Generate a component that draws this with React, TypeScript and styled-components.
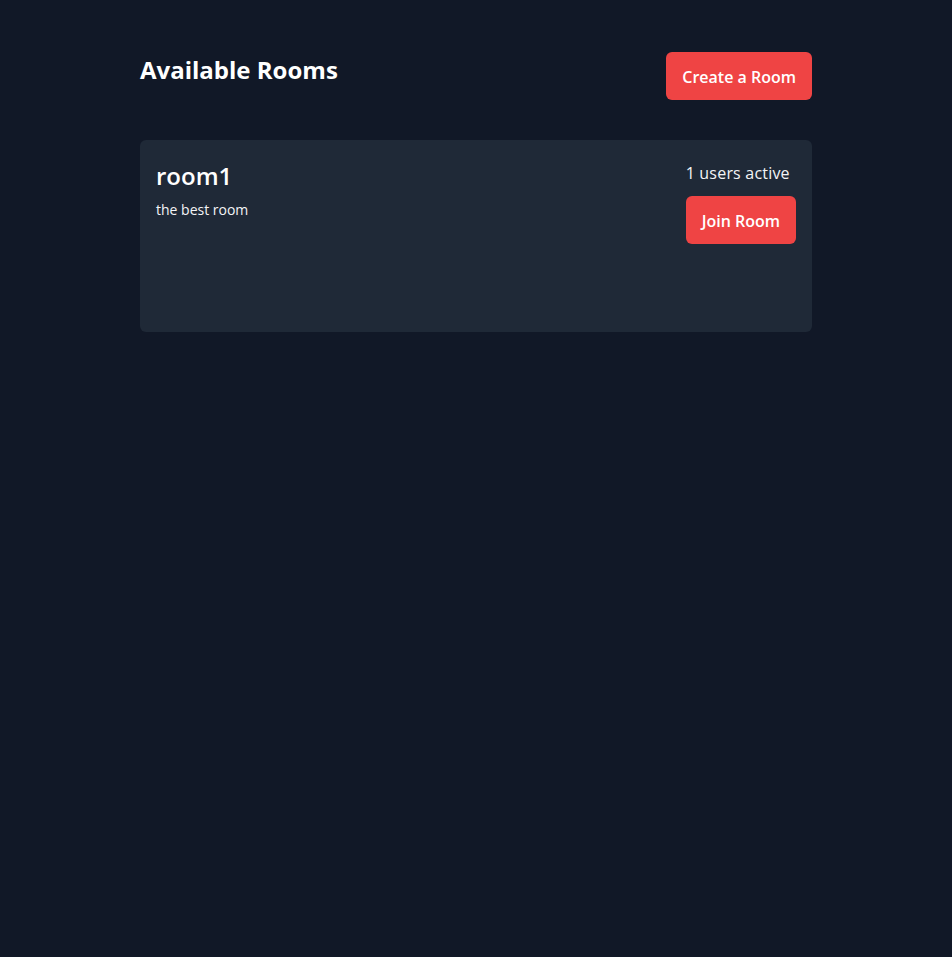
import React from 'react';
import styled, { createGlobalStyle } from 'styled-components';

const GlobalStyle = createGlobalStyle`
  html, body {
    margin: 0;
    padding: 0;
    background: #111827;
    font-family: "Open Sans", "Liberation Sans", sans-serif;
    color: #ffffff;
  }
  * { box-sizing: border-box; }
`;

const Page = styled.div`
  min-height: 100vh;
  background: #111827;
  padding-top: 52px;
`;

const Container = styled.div`
  max-width: 672px;
  margin: 0 auto;
`;

const Header = styled.div`
  display: flex;
  justify-content: space-between;
  align-items: flex-start;
  margin-bottom: 40px;
`;

const Title = styled.h1`
  margin: 0;
  font-size: 24px;
  line-height: 36px;
  font-weight: 700;
  color: #ffffff;
`;

const RedButton = styled.button`
  background: #ef4444;
  color: #ffffff;
  border: none;
  border-radius: 6px;
  padding: 13px 16px 11px;
  font-family: inherit;
  font-size: 16px;
  line-height: 24px;
  font-weight: 600;
  cursor: pointer;

  &:hover {
    background: #dc2626;
  }
`;

const RoomList = styled.div`
  display: flex;
  flex-direction: column;
  gap: 16px;
`;

const RoomCard = styled.div`
  display: flex;
  justify-content: space-between;
  align-items: flex-start;
  height: 192px;
  padding: 20px 16px;
  background: #1f2937;
  border-radius: 6px;
`;

const RoomName = styled.h2`
  margin: 0;
  font-size: 24px;
  line-height: 32px;
  font-weight: 600;
  color: #ffffff;
`;

const RoomDescription = styled.p`
  margin: 8px 0 0;
  font-size: 14px;
  line-height: 20px;
  color: #f3f4f6;
`;

const RoomSide = styled.div`
  display: flex;
  flex-direction: column;
  align-items: flex-start;
  gap: 10px;
`;

const ActiveCount = styled.span`
  font-size: 16px;
  line-height: 26px;
  font-weight: 500;
  letter-spacing: 0.2px;
  color: #f3f4f6;
`;

const rooms = [{ name: 'room1', description: 'the best room', users: 1 }];

const App = () => (
  <Page>
    <GlobalStyle />
    <Container>
      <Header>
        <Title>Available Rooms</Title>
        <RedButton>Create a Room</RedButton>
      </Header>
      <RoomList>
        {rooms.map((room) => (
          <RoomCard key={room.name}>
            <div>
              <RoomName>{room.name}</RoomName>
              <RoomDescription>{room.description}</RoomDescription>
            </div>
            <RoomSide>
              <ActiveCount>{room.users} users active</ActiveCount>
              <RedButton>Join Room</RedButton>
            </RoomSide>
          </RoomCard>
        ))}
      </RoomList>
    </Container>
  </Page>
);

export default App;
